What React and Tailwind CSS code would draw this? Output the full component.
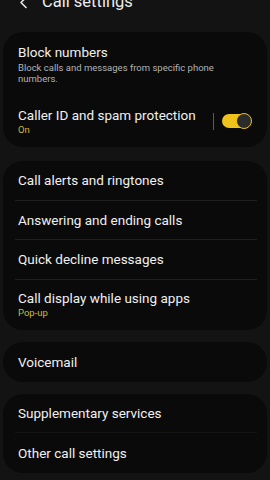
import React from 'react';

const font = { fontFamily: 'Roboto, "Noto Sans", sans-serif' };

const Divider = () => <div className="ml-[12px] mr-[10px] h-px bg-[#1f1f1f]" />;

const Row = ({ title, sub }) => (
    <div className={sub ? "px-[15px] pt-[9px] pb-[11px]" : "px-[15px] h-[38.5px] flex items-center"}>
        <div className="text-[13.5px] leading-[18px] text-[#f0f0f0]">{title}</div>
        {sub && <div className="text-[9.5px] leading-[12px] text-[#c9b93a]">{sub}</div>}
    </div>
);

const Toggle = () => (
    <div className="flex items-center gap-[8px]">
        <div className="w-px h-[17px] bg-[#5a5a5a]" />
        <div className="relative w-[29px] h-[14px] rounded-full bg-[#f0c21c]">
            <div className="absolute right-[-1px] top-[-1px] w-[16px] h-[16px] rounded-full bg-[#2b2b2b] border-[1.5px] border-[#f0c21c]" />
        </div>
    </div>
);

export default function App() {
    return (
        <div style={font} className="w-[270px] h-[480px] overflow-hidden bg-[#131313]">
            {/* header, cut off at top */}
            <div className="mt-[-8px] h-[20px] flex items-center pl-[19px] text-[#ededed]">
                <svg width="9" height="13" viewBox="0 0 9 13" className="mr-[14px]">
                    <path d="M7 1.5 L2 6.5 L7 11.5" stroke="#e6e6e6" strokeWidth="1.6" fill="none" strokeLinecap="round" strokeLinejoin="round" />
                </svg>
                <span className="text-[16.5px] leading-[20px]">Call settings</span>
            </div>

            <div className="mx-[3px] mt-[20px] rounded-[20px] bg-[#0a0a0a] pt-[11px] pb-[11px]">
                <div className="px-[15px]">
                    <div className="text-[13.5px] leading-[19px] text-[#f0f0f0]">Block numbers</div>
                    <div className="text-[9.5px] leading-[11px] text-[#b3b3b3] pr-[30px]">Block calls and messages from specific phone numbers.</div>
                </div>
                <div className="mt-[22px] pl-[15px] pr-[16px] flex items-center justify-between">
                    <div>
                        <div className="text-[13.5px] leading-[18px] text-[#f0f0f0]">Caller ID and spam protection</div>
                        <div className="text-[9.5px] leading-[12px] text-[#c9b93a]">On</div>
                    </div>
                    <Toggle />
                </div>
            </div>

            <div className="mx-[3px] mt-[14px] rounded-[20px] bg-[#0a0a0a]">
                <Row title="Call alerts and ringtones" />
                <Divider />
                <Row title="Answering and ending calls" />
                <Divider />
                <Row title="Quick decline messages" />
                <Divider />
                <Row title="Call display while using apps" sub="Pop-up" />
            </div>

            <div className="mx-[3px] mt-[12px] rounded-[20px] bg-[#0a0a0a] h-[40px] px-[15px] flex items-center">
                <div className="text-[13.5px] leading-[18px] text-[#f0f0f0]">Voicemail</div>
            </div>

            <div className="mx-[3px] mt-[12px] rounded-[20px] bg-[#0a0a0a]">
                <Row title="Supplementary services" />
                <div className="ml-[12px] mr-[10px] h-px bg-[#141414]" />
                <div className="px-[15px] h-[40px] flex items-center">
                    <div className="text-[13.5px] leading-[18px] text-[#f0f0f0]">Other call settings</div>
                </div>
            </div>
        </div>
    );
}
